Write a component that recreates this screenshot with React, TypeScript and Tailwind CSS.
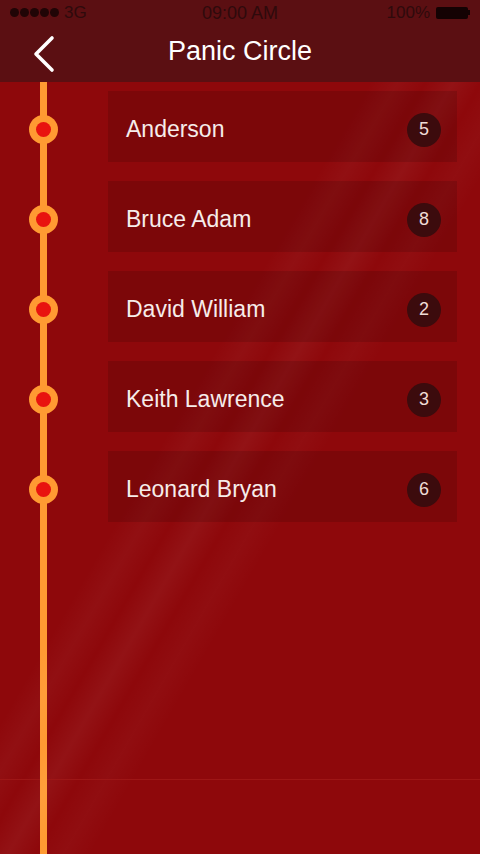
const members = [
  { name: "Anderson", count: 5 },
  { name: "Bruce Adam", count: 8 },
  { name: "David William", count: 2 },
  { name: "Keith Lawrence", count: 3 },
  { name: "Leonard Bryan", count: 6 },
];

/**
 * Panic Circle — timeline list of contacts with alert counts.
 */
export default function App() {
  return (
    <div className="flex h-[854px] w-[480px] flex-col overflow-hidden bg-[#8e080b] font-['Liberation_Sans',Arial,sans-serif] text-white">
      {/* Header with status bar */}
      <header className="flex h-[82px] flex-col bg-[#5b0f12]">
        <div className="flex h-[25px] items-center justify-between px-[10px] text-[17px] leading-none text-[#2e0a0c]">
          <div className="flex w-[140px] items-center gap-[5px]">
            <div className="flex gap-[1px]">
              {[0, 1, 2, 3, 4].map((i) => (
                <span key={i} className="h-[9px] w-[9px] rounded-full bg-[#200506]" />
              ))}
            </div>
            <span>3G</span>
          </div>
          <span className="text-[18px]">09:00 AM</span>
          <div className="flex w-[140px] items-center justify-end gap-[6px]">
            <span>100%</span>
            <div className="flex items-center">
              <span className="h-[12px] w-[32px] rounded-[2px] bg-[#140203]" />
              <span className="h-[5px] w-[2px] bg-[#140203]" />
            </div>
          </div>
        </div>
        <nav className="relative flex flex-1 items-center justify-center pb-[4px]">
          <button className="absolute left-[28px] top-[9px] text-white" aria-label="Back">
            <svg width="30" height="40" viewBox="0 0 30 40" fill="none" aria-hidden="true">
              <polyline
                points="24,4 8,20 24,36"
                stroke="currentColor"
                strokeWidth="3.6"
                strokeLinecap="round"
                strokeLinejoin="round"
              />
            </svg>
          </button>
          <h1 className="text-[27px] leading-none">Panic Circle</h1>
        </nav>
      </header>

      {/* Timeline body */}
      <main className="relative flex flex-1 flex-col bg-[linear-gradient(to_right,transparent_40px,#ff9a32_40px,#ff9a32_47px,transparent_47px)]">
        <div
          aria-hidden="true"
          className="pointer-events-none absolute inset-0 bg-[linear-gradient(120deg,transparent_40%,rgba(255,255,255,0.03)_43%,transparent_46%,rgba(255,255,255,0.045)_49%,transparent_52%,rgba(255,255,255,0.025)_55%,transparent_58%)]"
        />
        <ul className="relative flex flex-1 flex-col gap-[19px] pt-[9px]">
          {members.map((m) => (
            <li key={m.name} className="flex h-[71px] items-center">
              <div className="flex w-[108px] items-center pt-[6px]">
                <span className="ml-[29px] flex h-[29px] w-[29px] items-center justify-center rounded-full bg-[#ff9a32]">
                  <span className="h-[15px] w-[15px] rounded-full bg-[#e8130f]" />
                </span>
              </div>
              <div className="mr-[23px] flex h-full flex-1 items-center justify-between bg-black/[0.12] pl-[18px] pr-[16px] pt-[6px]">
                <span className="text-[23px] text-[#f6ecea]">{m.name}</span>
                <span className="flex h-[34px] w-[34px] items-center justify-center rounded-full bg-[#3c0b0d] text-[18px] text-[#f0dcd6]">
                  {m.count}
                </span>
              </div>
            </li>
          ))}
        </ul>
        {/* Bottom divider, broken by the timeline line */}
        <div className="relative flex h-[75px]">
          <div className="w-[40px] border-t border-[#9e1616]" />
          <div className="ml-[7px] flex-1 border-t border-[#9e1616]" />
        </div>
      </main>
    </div>
  );
}
